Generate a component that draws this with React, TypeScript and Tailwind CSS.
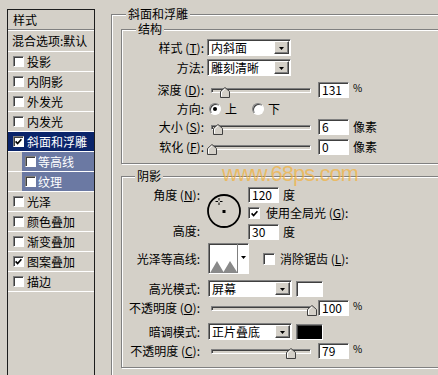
import React from 'react';

const sunken =
  'border border-t-[#808080] border-l-[#808080] border-b-white border-r-white shadow-[inset_1px_1px_0_#404040]';

function Key({ k }: { k: string }) {
  return (
    <>
      {' '}(<span className="underline underline-offset-1">{k}</span>):
    </>
  );
}

function Box({ on, big }: { on?: boolean; big?: boolean }) {
  return (
    <span
      className={`flex shrink-0 items-center justify-center bg-white ${sunken} ${
        big ? 'h-[12px] w-[12px]' : 'h-[11px] w-[11px]'
      }`}
    >
      {on && (
        <svg width="7" height="7" viewBox="0 0 7 7">
          <path d="M0.6 3.4 L2.6 5.6 L6.4 1.2" stroke="#000" strokeWidth="1.6" fill="none" />
        </svg>
      )}
    </span>
  );
}

function Arrow() {
  return (
    <svg width="5" height="3" viewBox="0 0 5 3">
      <path d="M0 0 H5 L2.5 3 Z" fill="#000" />
    </svg>
  );
}

function Select({ value }: { value: string }) {
  return (
    <div className={`flex h-[17px] w-[84px] shrink-0 items-center bg-white ${sunken}`}>
      <span className="flex-1 pl-[3px] whitespace-nowrap">{value}</span>
      <span className="mr-px flex h-[13px] w-[15px] items-center justify-center border border-t-white border-l-white border-b-[#404040] border-r-[#404040] bg-[#d4d0c8] pt-[2px] shadow-[inset_-1px_-1px_0_#808080]">
        <Arrow />
      </span>
    </div>
  );
}

function Input({ value }: { value: string }) {
  return (
    <div className={`flex h-[16px] w-[31px] shrink-0 items-center bg-white pl-[3px] ${sunken}`}>
      {value}
    </div>
  );
}

function Thumb() {
  return (
    <svg width="10" height="11" viewBox="0 0 10 11">
      <polygon points="0.5,10.5 0.5,4.5 5,0.5 9.5,4.5 9.5,10.5" fill="#d4d0c8" stroke="#404040" />
      <polyline points="1.5,9.5 1.5,5 5,1.8" stroke="#fff" fill="none" />
    </svg>
  );
}

function Slider({ pos }: { pos: number }) {
  return (
    <div className={`relative h-[5px] w-[100px] shrink-0 bg-[#d4d0c8] ${sunken}`}>
      <div className="absolute top-[-2px]" style={{ left: pos }}>
        <Thumb />
      </div>
    </div>
  );
}

function Radio({ on }: { on?: boolean }) {
  return (
    <span className="flex h-[12px] w-[12px] shrink-0 items-center justify-center rounded-full bg-white border border-t-[#808080] border-l-[#808080] border-b-white border-r-white shadow-[inset_1px_1px_0_#404040]">
      {on && <span className="h-[4px] w-[4px] rounded-full bg-black" />}
    </span>
  );
}

function Group({
  title,
  left,
  className,
  children,
}: {
  title: string;
  left: string;
  className: string;
  children?: React.ReactNode;
}) {
  return (
    <div
      className={`relative border border-[#808080] shadow-[inset_1px_1px_0_#fff,1px_1px_0_#fff] ${className}`}
    >
      <span className={`absolute -top-[7px] ${left} bg-[#d4d0c8] px-[2px] leading-[12px] whitespace-nowrap`}>
        {title}
      </span>
      {children}
    </div>
  );
}

const layers: { label: string; on?: boolean; sel?: boolean; sub?: boolean }[] = [
  { label: '投影' },
  { label: '内阴影' },
  { label: '外发光' },
  { label: '内发光' },
  { label: '斜面和浮雕', on: true, sel: true },
  { label: '等高线', sub: true },
  { label: '纹理', sub: true },
  { label: '光泽' },
  { label: '颜色叠加' },
  { label: '渐变叠加' },
  { label: '图案叠加', on: true },
  { label: '描边' },
];

function LayerList() {
  return (
    <div className="ml-[7px] mt-[9px] h-[380px] w-[88px] shrink-0 border border-[#1c1c1c]">
      <div className="flex h-[20px] items-center border-b border-[#808080] pl-[5px]">样式</div>
      <div className="flex h-[22px] items-center whitespace-nowrap border-y border-white pl-[4px]">
        混合选项:默认
      </div>
      {layers.map((l) => (
        <div key={l.label} className="flex h-[20px] border-b border-white">
          {l.sub && <div className="w-[14px] shrink-0" />}
          <div
            className={`flex flex-1 items-center whitespace-nowrap ${
              l.sub ? 'bg-[#6b79a3] pl-[3px] text-white' : 'pl-[5px]'
            } ${l.sel ? 'bg-[#0a246a] text-white' : ''}`}
          >
            <Box on={l.on} />
            <span className={l.sub ? 'ml-[2px]' : 'ml-[3px]'}>{l.label}</span>
          </div>
        </div>
      ))}
    </div>
  );
}

function Structure() {
  const label = 'w-[82px] shrink-0 text-right whitespace-nowrap';
  return (
    <Group title="结构" left="left-[14px]" className="h-[135px]">
      <div className="flex h-[17px] items-center mt-[9px]">
        <span className={label}>
          样式<Key k="T" />
        </span>
        <span className="ml-[3px]">
          <Select value="内斜面" />
        </span>
      </div>
      <div className="flex h-[17px] items-center mt-[3px]">
        <span className={label}>方法:</span>
        <span className="ml-[3px]">
          <Select value="雕刻清晰" />
        </span>
      </div>
      <div className="flex h-[16px] items-center mt-[6px]">
        <span className={label}>
          深度<Key k="D" />
        </span>
        <span className="ml-[7px]">
          <Slider pos={8} />
        </span>
        <span className="ml-[7px]">
          <Input value="131" />
        </span>
        <span className="ml-[4px] self-start mt-[1px] text-[10px] leading-[10px]">%</span>
      </div>
      <div className="flex h-[16px] items-center mt-[3px]">
        <span className={label}>方向:</span>
        <span className="ml-[5px]">
          <Radio on />
        </span>
        <span className="ml-[4px]">上</span>
        <span className="ml-[15px]">
          <Radio />
        </span>
        <span className="ml-[4px]">下</span>
      </div>
      <div className="flex h-[16px] items-center mt-[2px]">
        <span className={label}>
          大小<Key k="S" />
        </span>
        <span className="ml-[7px]">
          <Slider pos={1} />
        </span>
        <span className="ml-[7px]">
          <Input value="6" />
        </span>
        <span className="ml-[4px]">像素</span>
      </div>
      <div className="flex h-[16px] items-center mt-[4px]">
        <span className={label}>
          软化<Key k="F" />
        </span>
        <span className="ml-[7px]">
          <Slider pos={-5} />
        </span>
        <span className="ml-[7px]">
          <Input value="0" />
        </span>
        <span className="ml-[4px]">像素</span>
      </div>
    </Group>
  );
}

function Shading() {
  const label = 'w-[78px] shrink-0 text-right whitespace-nowrap';
  return (
    <Group title="阴影" left="left-[13px]" className="mt-[12px] h-[192px]">
      {/* angle + altitude block */}
      <div className="flex h-[53px] mt-[10px]">
        <div className="flex w-[78px] shrink-0 flex-col">
          <span className={`${label} flex h-[16px] items-center justify-end`}>
            角度<Key k="N" />
          </span>
          <span className={`${label} mt-[20px] flex h-[16px] items-center justify-end`}>高度:</span>
        </div>
        <svg width="36" height="36" viewBox="0 0 36 36" className="ml-[6px] mt-[6px] shrink-0">
          <circle cx="18" cy="18" r="16" stroke="#000" strokeWidth="1.8" fill="none" />
          <rect x="16.5" y="17" width="3" height="3" fill="#000" />
          <path d="M13 5 V12 M9.5 8.5 H16.5" stroke="#000" strokeWidth="1" />
          <rect x="12" y="7.5" width="2" height="2" fill="#d4d0c8" />
        </svg>
        <div className="ml-[6px] flex flex-col">
          <div className="flex h-[16px] items-center">
            <Input value="120" />
            <span className="ml-[4px]">度</span>
          </div>
          <div className="mt-[4px] flex h-[12px] items-center">
            <Box on big />
            <span className="ml-[6px] whitespace-nowrap">
              使用全局光<Key k="G" />
            </span>
          </div>
          <div className="mt-[5px] flex h-[16px] items-center">
            <Input value="30" />
            <span className="ml-[4px]">度</span>
          </div>
        </div>
      </div>
      <div className="flex h-[31px] items-center mt-[3px]">
        <span className={label}>光泽等高线:</span>
        <div className={`ml-[8px] flex h-[31px] w-[41px] shrink-0 bg-white ${sunken}`}>
          <svg width="28" height="29" viewBox="0 0 28 29" className="shrink-0">
            <polygon points="1,29 8,17 14.5,28 21,17 28,28 28,29" fill="#8a8a8a" />
          </svg>
          <div className="flex flex-1 justify-center border-l border-[#808080] pt-[12px]">
            <Arrow />
          </div>
        </div>
        <span className="ml-[14px]">
          <Box big />
        </span>
        <span className="ml-[5px] whitespace-nowrap">
          消除锯齿<Key k="L" />
        </span>
      </div>
      <div className="flex h-[17px] items-center mt-[6px]">
        <span className={label}>高光模式:</span>
        <span className="ml-[8px]">
          <Select value="屏幕" />
        </span>
        <span className={`ml-[4px] h-[16px] w-[27px] bg-white ${sunken}`} />
      </div>
      <div className="flex h-[16px] items-center mt-[3px]">
        <span className={label}>
          不透明度<Key k="O" />
        </span>
        <span className="ml-[11px]">
          <Slider pos={95} />
        </span>
        <span className="ml-[7px]">
          <Input value="100" />
        </span>
        <span className="ml-[4px] self-start mt-[1px] text-[10px] leading-[10px]">%</span>
      </div>
      <div className="flex h-[17px] items-center mt-[7px]">
        <span className={label}>暗调模式:</span>
        <span className="ml-[8px]">
          <Select value="正片叠底" />
        </span>
        <span className={`ml-[4px] h-[16px] w-[27px] bg-black ${sunken}`} />
      </div>
      <div className="flex h-[16px] items-center mt-[3px]">
        <span className={label}>
          不透明度<Key k="C" />
        </span>
        <span className="ml-[11px]">
          <Slider pos={74} />
        </span>
        <span className="ml-[7px]">
          <Input value="79" />
        </span>
        <span className="ml-[4px] self-start mt-[1px] text-[10px] leading-[10px]">%</span>
      </div>
    </Group>
  );
}

export default function App() {
  return (
    <div className="relative flex h-[375px] w-[438px] items-start overflow-hidden bg-[#d4d0c8] text-[12px] leading-[14px] text-black font-['Noto_Sans_CJK_SC','Noto_Sans',sans-serif]">
      <LayerList />
      <Group title="斜面和浮雕" left="left-[14px]" className="ml-[16px] mt-[14px] h-[400px] w-[360px] shrink-0">
        <div className="px-[9px] pt-[14px]">
          <Structure />
          <Shading />
        </div>
      </Group>
      {/* watermark over the dialog */}
      <span className="pointer-events-none absolute left-[222px] top-[163px] text-[22px] leading-[22px] tracking-[-1px] text-[#f3b13a]/70 font-['Liberation_Sans',sans-serif]">
        www.68ps.com
      </span>
    </div>
  );
}
